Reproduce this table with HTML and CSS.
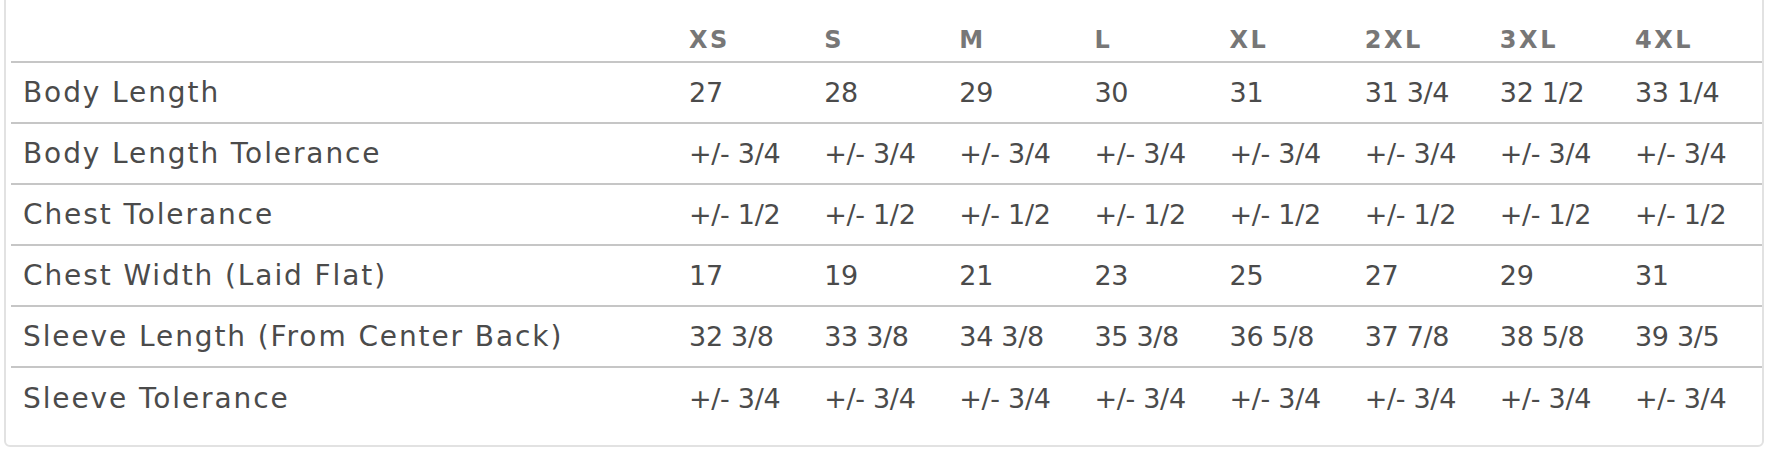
FILE: index.html
```html
<!DOCTYPE html>
<html lang="en">
<head>
<meta charset="utf-8">
<title>Size Chart</title>
<link rel="stylesheet" href="styles.css">
</head>
<body>
<div class="chart" role="table">
  <div class="row head" role="row">
    <div class="cell label" role="columnheader"></div>
    <div class="cell" role="columnheader">XS</div>
    <div class="cell" role="columnheader">S</div>
    <div class="cell" role="columnheader">M</div>
    <div class="cell" role="columnheader">L</div>
    <div class="cell" role="columnheader">XL</div>
    <div class="cell" role="columnheader">2XL</div>
    <div class="cell" role="columnheader">3XL</div>
    <div class="cell" role="columnheader">4XL</div>
  </div>
  <div class="row" role="row">
    <div class="cell label">Body Length</div>
    <div class="cell">27</div><div class="cell">28</div><div class="cell">29</div><div class="cell">30</div>
    <div class="cell">31</div><div class="cell">31 3/4</div><div class="cell">32 1/2</div><div class="cell">33 1/4</div>
  </div>
  <div class="row" role="row">
    <div class="cell label">Body Length Tolerance</div>
    <div class="cell">+/- 3/4</div><div class="cell">+/- 3/4</div><div class="cell">+/- 3/4</div><div class="cell">+/- 3/4</div>
    <div class="cell">+/- 3/4</div><div class="cell">+/- 3/4</div><div class="cell">+/- 3/4</div><div class="cell">+/- 3/4</div>
  </div>
  <div class="row" role="row">
    <div class="cell label">Chest Tolerance</div>
    <div class="cell">+/- 1/2</div><div class="cell">+/- 1/2</div><div class="cell">+/- 1/2</div><div class="cell">+/- 1/2</div>
    <div class="cell">+/- 1/2</div><div class="cell">+/- 1/2</div><div class="cell">+/- 1/2</div><div class="cell">+/- 1/2</div>
  </div>
  <div class="row" role="row">
    <div class="cell label">Chest Width (Laid Flat)</div>
    <div class="cell">17</div><div class="cell">19</div><div class="cell">21</div><div class="cell">23</div>
    <div class="cell">25</div><div class="cell">27</div><div class="cell">29</div><div class="cell">31</div>
  </div>
  <div class="row" role="row">
    <div class="cell label">Sleeve Length (From Center Back)</div>
    <div class="cell">32 3/8</div><div class="cell">33 3/8</div><div class="cell">34 3/8</div><div class="cell">35 3/8</div>
    <div class="cell">36 5/8</div><div class="cell">37 7/8</div><div class="cell">38 5/8</div><div class="cell">39 3/5</div>
  </div>
  <div class="row last" role="row">
    <div class="cell label">Sleeve Tolerance</div>
    <div class="cell">+/- 3/4</div><div class="cell">+/- 3/4</div><div class="cell">+/- 3/4</div><div class="cell">+/- 3/4</div>
    <div class="cell">+/- 3/4</div><div class="cell">+/- 3/4</div><div class="cell">+/- 3/4</div><div class="cell">+/- 3/4</div>
  </div>
</div>
</body>
</html>
```

FILE: styles.css
```css
html, body {
  margin: 0;
  padding: 0;
  background: #ffffff;
}

body {
  font-family: "DejaVu Sans", "Liberation Sans", sans-serif;
  color: #4b4b4b;
}

.chart {
  box-sizing: border-box;
  width: 1760px;
  margin: -2px 0 0 4px;
  padding: 0 0 16px 5px;
  border: 2px solid #e2e2e2;
  border-radius: 0 0 6px 6px;
}

.row {
  box-sizing: border-box;
  display: grid;
  grid-template-columns: 670px repeat(8, 1fr);
  align-items: center;
  height: 61px;
  border-bottom: 2px solid #c6c6c6;
}

.row.head {
  height: 63px;
  padding-top: 19px;
}

.row.last {
  border-bottom: none;
}

.cell {
  padding-left: 8px;
  font-size: 27px;
  line-height: 32px;
  white-space: nowrap;
  letter-spacing: -0.3px;
}

.cell.label {
  padding-left: 12px;
  font-size: 28px;
  letter-spacing: 1.9px;
}

.head .cell {
  font-size: 24px;
  font-weight: bold;
  color: #777777;
  letter-spacing: 2.6px;
}
```
